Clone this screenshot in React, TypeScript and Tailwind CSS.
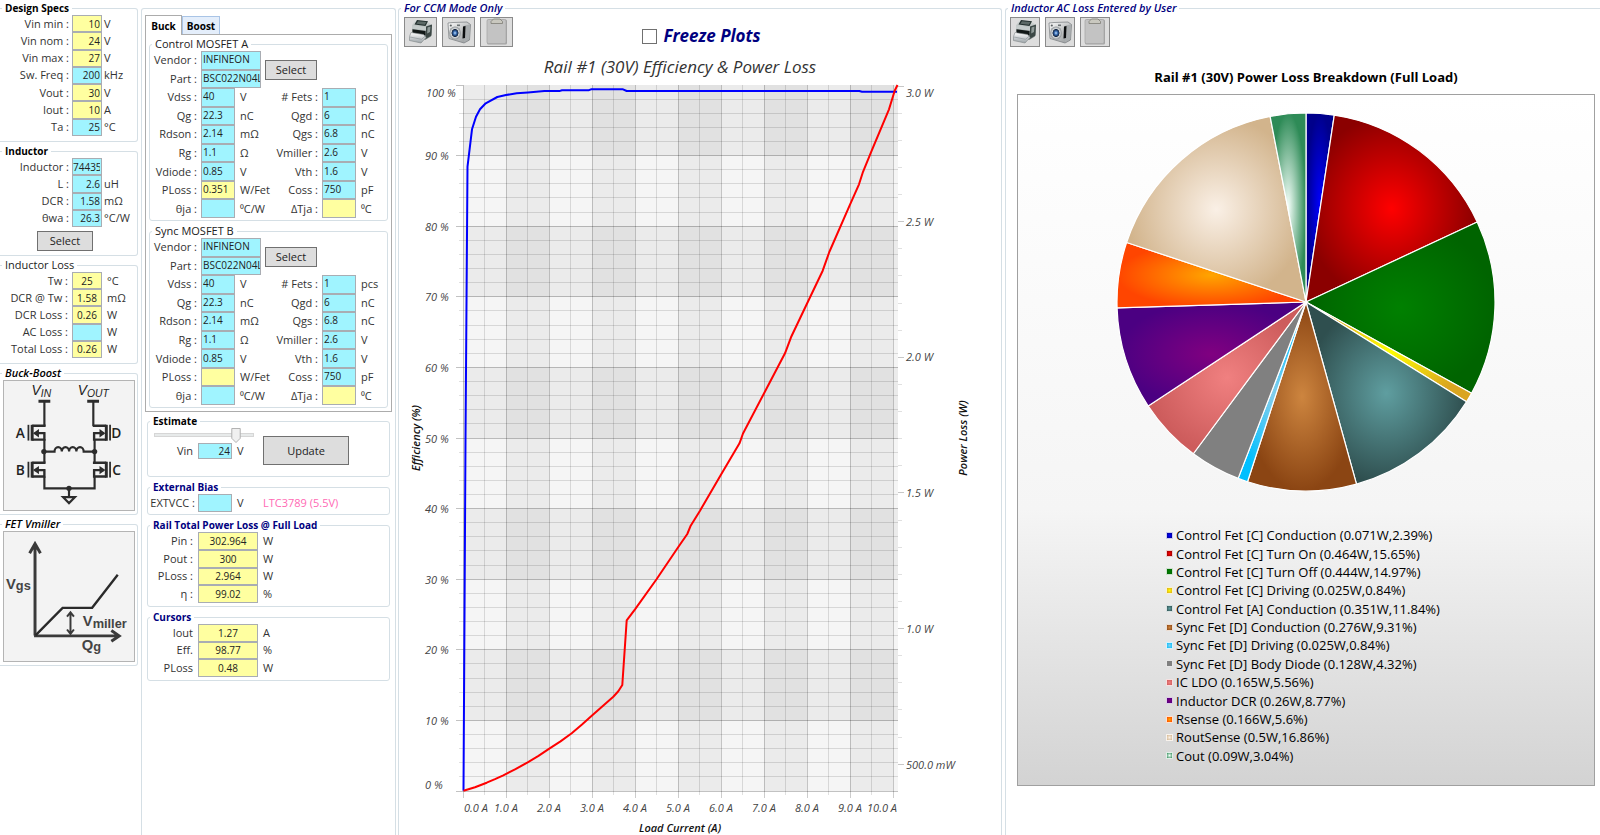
import { useState, type ReactNode } from "react";

type Tone = "cyan" | "yellow";

const toneClass: Record<Tone, string> = {
  cyan: "bg-[#a0f4ff]",
  yellow: "bg-[#ffffa0]",
};

const alignClass = {
  left: "text-left pl-px pb-[2px]",
  center: "text-center",
  right: "text-right pr-px",
};

const legendTone = {
  black: "text-[10px] font-bold text-black",
  plain: "text-[11px] font-normal text-[#222]",
  navy: "text-[10px] font-bold text-[#000080]",
  italic: "text-[11px] font-semibold italic text-black",
  navyItalic: "text-[11px] font-semibold italic text-[#000080]",
};

function Group({
  title,
  tone = "black",
  className = "",
  children,
}: {
  title: string;
  tone?: keyof typeof legendTone;
  className?: string;
  children: ReactNode;
}) {
  return (
    <fieldset className={`min-w-0 border border-[#d5dfe5] ${className}`}>
      <legend className={`ml-[2px] px-[3px] leading-[14px] whitespace-nowrap ${legendTone[tone]}`}>
        {title}
      </legend>
      {children}
    </fieldset>
  );
}

function Field({
  id,
  value,
  tone,
  align = "left",
}: {
  id: string;
  value: string;
  tone: Tone;
  align?: keyof typeof alignClass;
}) {
  return (
    <input
      id={id}
      type="text"
      defaultValue={value}
      className={`block h-full w-full min-w-0 rounded-none border border-[#a9adb3] text-[10px] leading-[14px] text-[#222] outline-none ${toneClass[tone]} ${alignClass[align]}`}
    />
  );
}

function PushButton({ className = "", children }: { className?: string; children: ReactNode }) {
  return (
    <button
      type="button"
      className={`border border-[#707070] bg-[#dddddd] text-[11px] leading-[14px] text-[#222] ${className}`}
    >
      {children}
    </button>
  );
}

type Row = [label: string, value: string, tone: Tone, unit: string];

function Rows({
  rows,
  prefix,
  align,
  columns,
  height,
  labelPad = "pr-[3px]",
  unitPad = "pl-[2px]",
}: {
  rows: Row[];
  prefix: string;
  align: keyof typeof alignClass;
  columns: string;
  height: string;
  labelPad?: string;
  unitPad?: string;
}) {
  return (
    <div className={`grid auto-rows-fr ${height}`}>
      {rows.map(([label, value, tone, unit]) => (
        <div key={label} className={`grid min-h-0 items-center ${columns}`}>
          <label htmlFor={`${prefix}-${label}`} className={`text-right whitespace-nowrap ${labelPad}`}>
            {label}
          </label>
          <Field id={`${prefix}-${label}`} value={value} tone={tone} align={align} />
          <span className={`whitespace-nowrap ${unitPad}`}>{unit}</span>
        </div>
      ))}
    </div>
  );
}

const designSpecs: Row[] = [
  ["Vin min :", "10", "yellow", "V"],
  ["Vin nom :", "24", "yellow", "V"],
  ["Vin max :", "27", "yellow", "V"],
  ["Sw. Freq :", "200", "cyan", "kHz"],
  ["Vout :", "30", "yellow", "V"],
  ["Iout :", "10", "yellow", "A"],
  ["Ta :", "25", "cyan", "°C"],
];

const inductor: Row[] = [
  ["Inductor :", "74435", "cyan", ""],
  ["L :", "2.6", "cyan", "uH"],
  ["DCR :", "1.58", "cyan", "mΩ"],
  ["θwa :", "26.3", "cyan", "°C/W"],
];

const inductorLoss: Row[] = [
  ["Tw :", "25", "yellow", "°C"],
  ["DCR @ Tw :", "1.58", "yellow", "mΩ"],
  ["DCR Loss :", "0.26", "yellow", "W"],
  ["AC Loss :", "", "cyan", "W"],
  ["Total Loss :", "0.26", "yellow", "W"],
];

const railTotals: Row[] = [
  ["Pin :", "302.964", "yellow", "W"],
  ["Pout :", "300", "yellow", "W"],
  ["PLoss :", "2.964", "yellow", "W"],
  ["η :", "99.02", "yellow", "%"],
];

const cursors: Row[] = [
  ["Iout", "1.27", "yellow", "A"],
  ["Eff.", "98.77", "yellow", "%"],
  ["PLoss", "0.48", "yellow", "W"],
];

function mosfetRows(ploss: string): [Row, Row][] {
  return [
    [["Vdss :", "40", "cyan", "V"], ["# Fets :", "1", "cyan", "pcs"]],
    [["Qg :", "22.3", "cyan", "nC"], ["Qgd :", "6", "cyan", "nC"]],
    [["Rdson :", "2.14", "cyan", "mΩ"], ["Qgs :", "6.8", "cyan", "nC"]],
    [["Rg :", "1.1", "cyan", "Ω"], ["Vmiller :", "2.6", "cyan", "V"]],
    [["Vdiode :", "0.85", "cyan", "V"], ["Vth :", "1.6", "cyan", "V"]],
    [["PLoss :", ploss, "yellow", "W/Fet"], ["Coss :", "750", "cyan", "pF"]],
    [["θja :", "", "cyan", "⁰C/W"], ["ΔTja :", "", "yellow", "⁰C"]],
  ];
}

function Mosfet({ title, prefix, ploss }: { title: string; prefix: string; ploss: string }) {
  return (
    <Group title={title} tone="plain" className="rounded-[3px] pb-[2px]">
      <div className="flex items-center">
        <div className="grid h-[37px] grid-cols-[51px_60px] grid-rows-2 items-center">
          <label htmlFor={`${prefix}-vendor`} className="pr-[4px] text-right">Vendor :</label>
          <Field id={`${prefix}-vendor`} value="INFINEON" tone="cyan" />
          <label htmlFor={`${prefix}-part`} className="pr-[4px] text-right">Part :</label>
          <Field id={`${prefix}-part`} value="BSC022N04L" tone="cyan" />
        </div>
        <PushButton className="ml-1 h-5 w-[52px]">Select</PushButton>
      </div>
      <div className="grid h-[130px] auto-rows-fr">
        {mosfetRows(ploss).map(([a, b]) => (
          <div key={a[0]} className="grid min-h-0 grid-cols-[51px_34px_37px_50px_34px_1fr] items-center">
            {[a, b].map(([label, value, tone, unit]) => (
              <div key={label} className="contents">
                <label htmlFor={`${prefix}-${label}`} className="pr-[4px] text-right whitespace-nowrap">
                  {label}
                </label>
                <Field id={`${prefix}-${label}`} value={value} tone={tone} />
                <span className="pl-[5px] whitespace-nowrap">{unit}</span>
              </div>
            ))}
          </div>
        ))}
      </div>
    </Group>
  );
}

function Fet({ x, y, flip = false }: { x: number; y: number; flip?: boolean }) {
  return (
    <g transform={`translate(${x} ${y}) scale(${flip ? -1 : 1} 1)`} fill="none" stroke="#2c2c2c" strokeWidth="2.4">
      <path d="M-16.2 -1V15" strokeWidth="1.8" />
      <path d="M-12.4 -1V15.2" strokeWidth="3" />
      <path d="M-12.4 0H1.2M-10 7.5H1M-12.4 14H1.2M0 6.5V15" />
      <path d="M-11.5 7.5L-5.5 3.2V11.8Z" fill="#2c2c2c" stroke="none" />
    </g>
  );
}

function BuckBoostDiagram() {
  return (
    <svg viewBox="0 0 132 131" className="block w-full" role="img" aria-label="Buck-Boost topology">
      <g fontFamily="'Liberation Sans', sans-serif" fontSize="14" fill="#222">
        <text x="28" y="14" fontStyle="italic">V<tspan fontSize="10.5" dy="2">IN</tspan></text>
        <text x="75" y="14" fontStyle="italic">V<tspan fontSize="10.5" dy="2">OUT</tspan></text>
      </g>
      <g fontFamily="'Open Sans', sans-serif" fontSize="14" fontWeight="600" fill="#222">
        <text x="12" y="58">A</text>
        <text x="109" y="58">D</text>
        <text x="12" y="95">B</text>
        <text x="110" y="95">C</text>
      </g>
      <path d="M35 20.5H47M84.5 20.5H96.5" stroke="#2c2c2c" strokeWidth="3" />
      <g fill="none" stroke="#2c2c2c" strokeWidth="2.2">
        <path d="M41 20V46M90.7 20V46M41 59V83M92 59V83M41 97V109H92V97M66 109V118" />
        <path d="M41 71.7H51.3a3.7 4.6 0 0 1 7.4 0a3.7 4.6 0 0 1 7.4 0a3.7 4.6 0 0 1 7.4 0a3.7 4.6 0 0 1 7.4 0H92" />
        <path d="M60 118H72L66 124Z" fill="#f3f3f3" />
      </g>
      <g fill="#2c2c2c">
        <circle cx="40.5" cy="71.7" r="2.7" />
        <circle cx="92" cy="71.7" r="2.7" />
        <circle cx="66" cy="109" r="2.7" />
      </g>
      <Fet x={41} y={45.5} />
      <Fet x={41} y={83} />
      <Fet x={91.5} y={45.5} flip />
      <Fet x={91.5} y={83} flip />
    </svg>
  );
}

function VmillerDiagram() {
  return (
    <svg viewBox="0 0 132 131" className="block w-full" role="img" aria-label="FET gate charge curve">
      <g fill="none" stroke="#3a3a3a" strokeWidth="3">
        <path d="M31.5 105V13M26 21.5L31.500 12L37 21.500" />
        <path d="M30.500 105.500H116M109 100L117 105.500L109 111" />
      </g>
      <path d="M32 105L59.500 77H89.500L115.500 43.500" fill="none" stroke="#2a2a2a" strokeWidth="2.4" />
      <path d="M67.500 82V103M64 86L67.500 81.500L71 86M64 99L67.500 103.500L71 99" fill="none" stroke="#3a3a3a" strokeWidth="2" />
      <g fontFamily="'Liberation Sans', sans-serif" fontWeight="700" fill="#444">
        <text x="2" y="58" fontSize="15">V<tspan dy="1" fontSize="13">gs</tspan></text>
        <text x="80" y="95" fontSize="15">V<tspan dy="2" fontSize="13">miller</tspan></text>
        <text x="79" y="120" fontSize="15">Q<tspan dy="1" fontSize="13">g</tspan></text>
      </g>
    </svg>
  );
}

function PrinterIcon() {
  return (
    <svg viewBox="0 0 28 28" className="size-[28px] shrink-0" aria-hidden="true">
      <defs>
        <linearGradient id="prBody" x1="0" y1="0" x2="0" y2="1">
          <stop offset="0" stopColor="#d9dedd" />
          <stop offset="1" stopColor="#6f7a78" />
        </linearGradient>
        <linearGradient id="prTray" x1="0" y1="0" x2="0" y2="1">
          <stop offset="0" stopColor="#ffffff" />
          <stop offset="1" stopColor="#9aa2a6" />
        </linearGradient>
      </defs>
      <path d="M8 2.5L20 3.5L25 7L24 18.5L18 22L5 13.5V7.5Z" fill="url(#prBody)" />
      <path d="M10 2L21 3.2L18.5 8L7.5 6.5Z" fill="#23302e" />
      <path d="M11 3.2L19.5 4L17.8 6.8L9.3 5.7Z" fill="#5c6966" />
      <path d="M19 8.5L25 6.5L24.5 17.5L18.5 21Z" fill="#3b4745" />
      <path d="M20.5 9.5L23.5 8.5L23 14L20.2 15.5Z" fill="#8f9a98" />
      <path d="M5 7.2L19 9V12.5L5 10.8Z" fill="#c5cccb" />
      <path d="M5.5 11.2L18.5 13V17.5L5.5 15Z" fill="#111817" />
      <path d="M4 14.5L16.5 16.5L19 19.5L14 25L2.5 22.5V18.5Z" fill="url(#prTray)" stroke="#7d8587" strokeWidth=".6" />
      <path d="M3 19L14.5 21.3L18.5 18" fill="none" stroke="#8d959a" strokeWidth=".7" />
    </svg>
  );
}

function CameraIcon() {
  return (
    <svg viewBox="0 0 28 28" className="size-[28px] shrink-0" aria-hidden="true">
      <defs>
        <linearGradient id="cmBody" x1="0" y1="0" x2="1" y2="1">
          <stop offset="0" stopColor="#fbfbfb" />
          <stop offset="1" stopColor="#8e9294" />
        </linearGradient>
        <radialGradient id="cmLens">
          <stop offset="0" stopColor="#bfe0ff" />
          <stop offset=".3" stopColor="#2f62a8" />
          <stop offset=".55" stopColor="#16263f" />
          <stop offset=".65" stopColor="#d9dcde" />
          <stop offset="1" stopColor="#8b9093" />
        </radialGradient>
      </defs>
      <path d="M3 5L8 4.5L22 4L25.5 6.5L24.5 22L19 25L4 20.5Z" fill="url(#cmBody)" stroke="#74797b" strokeWidth=".7" />
      <path d="M19.5 7.5L25 6.5L24.3 21.5L18.8 24.5Z" fill="#a9adaf" />
      <path d="M18 8.5L20.5 8L20 20L17.5 20.5Z" fill="#0b0d0e" />
      <rect x="12" y="6.5" width="3" height="1.6" fill="#6c7274" />
      <circle cx="5.8" cy="7.5" r="1.1" fill="#5a5f61" />
      <ellipse cx="10" cy="15" rx="5.8" ry="6.6" fill="url(#cmLens)" />
    </svg>
  );
}

function ClipboardIcon() {
  return (
    <svg viewBox="0 0 28 28" className="size-[28px] shrink-0" aria-hidden="true">
      <rect x="4" y="1.5" width="20" height="25" rx="1.5" fill="#a2a2a2" />
      <rect x="4" y="1.5" width="19" height="24" rx="1.5" fill="#c3c3c3" stroke="#a8a8a8" strokeWidth=".8" />
      <path d="M8 5.5V3.5L10.5 1H17L19.5 3.5V5.5Z" fill="#c9c8bf" stroke="#7f7e76" strokeWidth=".8" />
    </svg>
  );
}

function Toolbar({ size, label }: { size: string; label: string }) {
  const items: [string, ReactNode][] = [
    ["Print", <PrinterIcon />],
    ["Snapshot", <CameraIcon />],
    ["Copy", <ClipboardIcon />],
  ];
  return (
    <div className="flex gap-[5px]">
      {items.map(([name, icon]) => (
        <button
          key={name}
          type="button"
          aria-label={`${name} ${label}`}
          className={`flex h-[30px] items-center justify-center border border-[#8a8a8a] bg-[#dddddd] ${size}`}
        >
          {icon}
        </button>
      ))}
    </div>
  );
}

const PLOT = { left: 64, right: 499, top: 35, bottom: 741, amp: 43, pct: 7.06 };

const lossCurve =
  "463.5,790.7 475,787.2 486.7,782.7 495,779.2 503.3,775.3 515.5,769.2 527.7,762.3 538.5,755.8 549.3,748.7 560.5,741.4 571.7,733.3 582,724.6 592.3,715.3 613.3,696.7 618.3,691.3 622.3,685 626.7,620.3 635,609.3 656.7,579 678.3,547 687.3,534 690.7,525.7 700,510.7 720.5,475.5 739.5,443.3 743,433.5 763.3,394.7 785,353.3 791,337.3 806.7,304.3 822.7,270.7 829.3,252 850,204.7 859,184.3 862.7,172.7 871.7,150.7 889,109.3 894.7,90.7 897.5,85";
const efficiencyCurve =
  "463.5,790.7 465.5,440 467.5,166.7 472,129.3 476,116.7 480,109.3 485.7,103.3 497.3,97 506,95 516.7,93.3 528,92.5 544.3,91 560,90.9 562,90.2 589,90.2 591,89.3 623,89.3 626.7,91 859.3,91 862,91.7 897,91.7";

function EfficiencyChart() {
  const xAt = (a: number) => PLOT.left + a * PLOT.amp;
  const yAt = (p: number) => PLOT.bottom - p * PLOT.pct;
  const halfAmps = Array.from({ length: 21 }, (_, i) => i / 2);
  const evenPercents = Array.from({ length: 51 }, (_, i) => i * 2);
  return (
    <svg viewBox="0 0 602 785" className="block w-full" role="img" aria-label="Efficiency and power loss against load current">
      <text x="281" y="23" textAnchor="middle" fontSize="17" fontStyle="italic" fill="#333">
        Rail #1 (30V) Efficiency &amp; Power Loss
      </text>
      <rect x={PLOT.left} y={PLOT.top} width={PLOT.right - PLOT.left} height={PLOT.bottom - PLOT.top} fill="#f5f5f5" />
      {[1, 3, 5, 7, 9].map((a) => (
        <rect key={a} x={xAt(a)} y={PLOT.top} width={PLOT.amp} height={PLOT.bottom - PLOT.top} fill="#000" fillOpacity=".041" />
      ))}
      {[20, 40, 60, 80, 100].map((p) => (
        <rect key={p} x={PLOT.left} y={yAt(p)} width={PLOT.right - PLOT.left} height={PLOT.pct * 10} fill="#000" fillOpacity=".041" />
      ))}
      <g stroke="#000" shapeRendering="crispEdges">
        {halfAmps.map((a) => (
          <line
            key={a}
            x1={xAt(a)}
            x2={xAt(a)}
            y1={PLOT.top}
            y2={PLOT.bottom + (a % 1 ? 4 : 7)}
            strokeOpacity={a % 1 ? 0.12 : 0.2}
          />
        ))}
        {evenPercents.map((p) => (
          <line
            key={p}
            x1={PLOT.left - (p % 10 ? 4 : 7)}
            x2={p === 100 ? PLOT.left : PLOT.right}
            y1={yAt(p)}
            y2={yAt(p)}
            strokeOpacity={p % 10 ? 0.12 : 0.24}
          />
        ))}
        {Array.from({ length: 26 }, (_, i) => {
          const y = 36 + i * 27.13;
          return (
            <line key={i} x1={PLOT.right} x2={PLOT.right + (i % 5 ? 4 : 6)} y1={y} y2={y} strokeOpacity={i % 5 ? 0.12 : 0.22} />
          );
        })}
      </g>
      <g transform="translate(-399 -50)" fill="none" strokeWidth="2" strokeLinejoin="round">
        <polyline points={efficiencyCurve} stroke="#0000ff" />
        <polyline points={lossCurve} stroke="#ff0000" />
      </g>
      <g fontSize="11" fontStyle="italic" fill="#444">
        <text x="27" y="47">100 %</text>
        {[90, 80, 70, 60, 50, 40, 30, 20, 10].map((p) => (
          <text key={p} x="26" y={yAt(p) + 4.5}>{p} %</text>
        ))}
        <text x="26" y="739">0 %</text>
        <text x="65" y="762">0.0 A</text>
        {[1, 2, 3, 4, 5, 6, 7, 8, 9].map((a) => (
          <text key={a} x={xAt(a)} y="762" textAnchor="middle">{a}.0 A</text>
        ))}
        <text x="498" y="762" textAnchor="end">10.0 A</text>
        {["3.0 W", "2.5 W", "2.0 W", "1.5 W", "1.0 W", "500.0 mW"].map((t, i) => (
          <text key={t} x="507" y={i === 0 ? 47 : 40 + i * 135.7}>{t}</text>
        ))}
      </g>
      <g fontSize="11" fontStyle="italic" fontWeight="600" fill="#111" textAnchor="middle">
        <text x="281" y="782">Load Current (A)</text>
        <text transform="translate(21 388) rotate(-90)">Efficiency (%)</text>
        <text transform="translate(568 388) rotate(-90)">Power Loss (W)</text>
      </g>
    </svg>
  );
}

const slices: [name: string, watts: string, percent: number, inner: string, outer: string][] = [
  ["Control Fet [C] Conduction", "0.071", 2.39, "#0000ff", "#00008b"],
  ["Control Fet [C] Turn On", "0.464", 15.65, "#ff0000", "#8b0000"],
  ["Control Fet [C] Turn Off", "0.444", 14.97, "#008000", "#006400"],
  ["Control Fet [C] Driving", "0.025", 0.84, "#ffff00", "#daa520"],
  ["Control Fet [A] Conduction", "0.351", 11.84, "#5f9ea0", "#2f4f4f"],
  ["Sync Fet [D] Conduction", "0.276", 9.31, "#cd853f", "#8b4513"],
  ["Sync Fet [D] Driving", "0.025", 0.84, "#87ceeb", "#00bfff"],
  ["Sync Fet [D] Body Diode", "0.128", 4.32, "#808080", "#808080"],
  ["IC LDO", "0.165", 5.56, "#f08080", "#cd5c5c"],
  ["Inductor DCR", "0.26", 8.77, "#800080", "#4b0082"],
  ["Rsense", "0.166", 5.6, "#ffa500", "#ff4500"],
  ["RoutSense", "0.5", 16.86, "#faf0e6", "#d2b48c"],
  ["Cout", "0.09", 3.04, "#f5fffa", "#2e8b57"],
];

function LossPie() {
  const r = 189;
  const total = slices.reduce((sum, s) => sum + s[2], 0);
  let turned = 0;
  const point = (part: number) => {
    const angle = (part / total) * 2 * Math.PI;
    return `${(r + r * Math.sin(angle)).toFixed(2)} ${(r - r * Math.cos(angle)).toFixed(2)}`;
  };
  return (
    <svg viewBox="0 0 378 378" className="block w-[378px] max-w-full overflow-visible" role="img" aria-label="Power loss by part">
      {slices.map(([name, , percent, inner, outer], i) => {
        const from = point(turned);
        turned += percent;
        const to = point(turned);
        return (
          <g key={name}>
            <radialGradient id={`slice${i}`}>
              <stop offset="0" stopColor={inner} />
              <stop offset="1" stopColor={outer} />
            </radialGradient>
            <path d={`M${r} ${r}L${from}A${r} ${r} 0 0 1 ${to}Z`} fill={`url(#slice${i})`} stroke="#fff" strokeWidth="1.2" />
          </g>
        );
      })}
    </svg>
  );
}

export default function App() {
  const [vin, setVin] = useState(24);
  const [frozen, setFrozen] = useState(false);
  const [tab, setTab] = useState("Buck");
  const thumb = ((vin - 10) / 17) * 100;

  return (
    <main className="grid min-h-screen grid-cols-[141px_255px_607fr_597fr] overflow-hidden bg-white font-['Open_Sans',sans-serif] text-[11px] leading-[14px] text-[#333]">
      <section className="flex flex-col gap-[2px] pt-px pr-[3px]">
        <Group title="Design Specs" className="rounded-r-[3px] border-l-0 pb-[5px]">
          <Rows rows={designSpecs} prefix="spec" align="right" columns="grid-cols-[72px_30px_1fr]" height="h-[121px]" />
        </Group>
        <Group title="Inductor" className="rounded-r-[3px] border-l-0 pb-[4px]">
          <Rows rows={inductor} prefix="ind" align="right" columns="grid-cols-[72px_30px_1fr]" height="h-[69px]" />
          <PushButton className="mt-1 ml-[37px] block h-5 w-14">Select</PushButton>
        </Group>
        <Group title="Inductor Loss" tone="plain" className="rounded-r-[3px] border-l-0 pb-[5px]">
          <Rows
            rows={inductorLoss}
            prefix="loss"
            align="center"
            columns="grid-cols-[72px_30px_1fr]"
            height="h-[86px]"
            labelPad="pr-[4px]"
            unitPad="pl-[5px]"
          />
        </Group>
        <Group title="Buck-Boost" tone="italic" className="rounded-r-[3px] border-l-0 pb-[3px]">
          <div className="mr-[2px] ml-[3px] border border-[#b4b4b4] bg-[#f3f3f3]">
            <BuckBoostDiagram />
          </div>
        </Group>
        <Group title="FET Vmiller" tone="italic" className="rounded-r-[3px] border-l-0 pb-[3px]">
          <div className="mr-[2px] ml-[3px] border border-[#b4b4b4] bg-[#f3f3f3]">
            <VmillerDiagram />
          </div>
        </Group>
      </section>

      <section className="mt-2 rounded-t-[3px] border border-b-0 border-[#d5dfe5] pt-[6px] pr-[3px] pl-[3px]">
        <div role="tablist" className="flex items-end">
          {["Buck", "Boost"].map((name) => (
            <button
              key={name}
              type="button"
              role="tab"
              aria-selected={tab === name}
              onClick={() => setTab(name)}
              className={
                tab === name
                  ? "relative -mb-px h-5 w-[37px] border border-b-0 border-[#acacac] bg-white text-[10px] font-bold text-black"
                  : "h-[18px] w-[38px] border border-b-0 border-[#a9c4e6] bg-[#e4eefb] text-[10px] font-bold text-black"
              }
            >
              {name}
            </button>
          ))}
        </div>
        <div role="tabpanel" className="flex flex-col gap-[3px] border border-[#acacac] px-[3px] pt-[2px] pb-[3px]">
          <Mosfet title="Control MOSFET A" prefix="a" ploss="0.351" />
          <Mosfet title="Sync MOSFET B" prefix="b" ploss="" />
        </div>

        <div className="mt-[2px] flex flex-col gap-[3px] px-[2px]">
          <Group title="Estimate" className="rounded-[3px] pb-[11px]">
            <div className="flex">
              <div className="w-[115px]">
                <div className="relative ml-[6px] h-[15px] w-[100px]">
                  <input
                    type="range"
                    aria-label="Estimate Vin"
                    min={10}
                    max={27}
                    value={vin}
                    onChange={(e) => setVin(Number(e.target.value))}
                    className="absolute inset-0 h-[13px] w-full appearance-none bg-transparent [&::-webkit-slider-runnable-track]:h-1 [&::-webkit-slider-runnable-track]:border [&::-webkit-slider-runnable-track]:border-[#d6d6d6] [&::-webkit-slider-runnable-track]:bg-[#e7eaea] [&::-webkit-slider-thumb]:h-1 [&::-webkit-slider-thumb]:w-2 [&::-webkit-slider-thumb]:appearance-none"
                  />
                  <svg
                    viewBox="0 0 10 16"
                    className="pointer-events-none absolute top-0 h-[15px] w-[10px] -translate-x-1/2"
                    style={{ left: `${thumb}%` }}
                    aria-hidden="true"
                  >
                    <path d="M.5 .5H9.5V11L5 15.5L.5 11Z" fill="#f0f0f0" stroke="#acacac" />
                  </svg>
                </div>
                <div className="grid h-4 grid-cols-[50px_34px_1fr] items-center">
                  <label htmlFor="est-vin" className="pr-[5px] text-right">Vin</label>
                  <Field id="est-vin" value="24" tone="cyan" align="right" />
                  <span className="pl-[5px]">V</span>
                </div>
              </div>
              <PushButton className="mt-2 h-[29px] w-[86px]">Update</PushButton>
            </div>
          </Group>
          <Group title="External Bias" tone="navy" className="rounded-[3px] pb-[2px]">
            <div className="grid h-[18px] grid-cols-[50px_34px_31px_1fr] items-center">
              <label htmlFor="extvcc" className="pr-[3px] text-right whitespace-nowrap">EXTVCC :</label>
              <Field id="extvcc" value="" tone="cyan" />
              <span className="pl-[5px]">V</span>
              <span className="text-[#ff69b4]">LTC3789 (5.5V)</span>
            </div>
          </Group>
          <Group title="Rail Total Power Loss @ Full Load" tone="navy" className="rounded-[3px] pb-[3px]">
            <Rows
              rows={railTotals}
              prefix="rail"
              align="center"
              columns="grid-cols-[50px_60px_1fr]"
              height="h-[71px]"
              labelPad="pr-[5px]"
              unitPad="pl-[5px]"
            />
          </Group>
          <Group title="Cursors" tone="navy" className="rounded-[3px] pb-[3px]">
            <Rows
              rows={cursors}
              prefix="cursor"
              align="center"
              columns="grid-cols-[50px_60px_1fr]"
              height="h-[53px]"
              labelPad="pr-[5px]"
              unitPad="pl-[5px]"
            />
          </Group>
        </div>
      </section>

      <section className="flex pt-px pr-px pl-[2px]">
        <Group title="For CCM Mode Only" tone="navyItalic" className="flex-1 rounded-t-[3px] border-b-0">
          <div className="grid grid-cols-[1fr_auto_1fr] items-center pt-[2px] pr-[2px] pl-[5px]">
            <Toolbar size="w-[33px]" label="efficiency plot" />
            <label className="flex items-center gap-[6px] pt-[8px] text-[17px] leading-[22px] font-bold text-[#000080] italic">
              <input
                type="checkbox"
                checked={frozen}
                onChange={(e) => setFrozen(e.target.checked)}
                className="size-[15px] appearance-none border border-[#707070] bg-white checked:bg-[#000080]"
              />
              Freeze Plots
            </label>
          </div>
          <div className="mt-[3px]">
            <EfficiencyChart />
          </div>
        </Group>
      </section>

      <section className="flex pt-px pl-[2px]">
        <Group title="Inductor AC Loss Entered by User" tone="navyItalic" className="flex-1 rounded-tl-[3px] border-r-0 border-b-0">
          <div className="pt-[2px] pl-[4px]">
            <Toolbar size="w-[30px]" label="loss breakdown" />
          </div>
          <h2 className="mt-[18px] pl-[6px] text-center text-[13px] leading-6 font-bold text-black">
            Rail #1 (30V) Power Loss Breakdown (Full Load)
          </h2>
          <div className="mt-[5px] mr-[5px] ml-[11px] flex flex-col items-center border border-[#a0a0a0] bg-linear-to-b from-white via-[#f5f5f5] via-60% to-[#d3d3d3] pt-[18px] pb-[20px]">
            <LossPie />
            <ul className="mt-[35px] grid h-[239px] auto-rows-fr pr-[6px] text-[13px] leading-[18px] text-black">
              {slices.map(([name, watts, percent, inner, outer]) => (
                <li key={name} className="flex items-center gap-[3px] whitespace-nowrap">
                  <span
                    className="size-[7px] border border-white/80"
                    style={{ background: `radial-gradient(${inner}, ${outer})` }}
                  />
                  {`${name} (${watts}W,${percent}%)`}
                </li>
              ))}
            </ul>
          </div>
        </Group>
      </section>
    </main>
  );
}
